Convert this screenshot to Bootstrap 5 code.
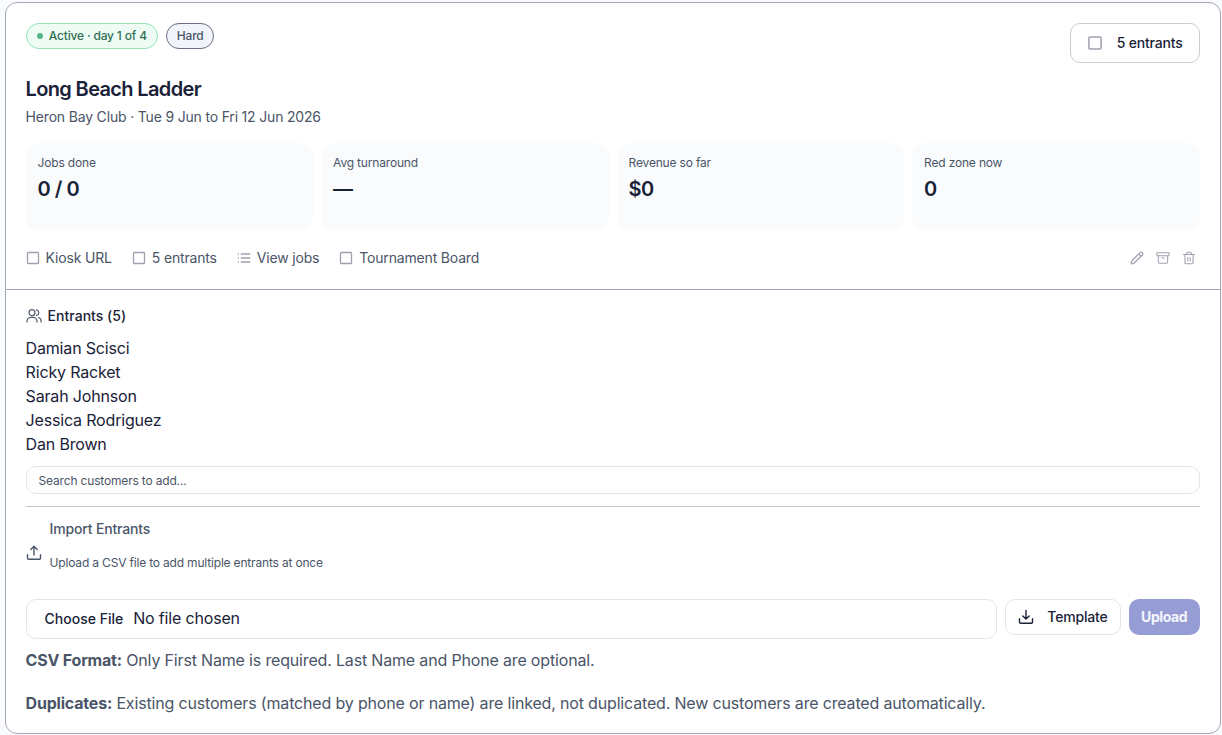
<!DOCTYPE html>
<html lang="en">
<head>
<meta charset="utf-8">
<meta name="viewport" content="width=device-width, initial-scale=1">
<title>Long Beach Ladder</title>
<link href="https://cdn.jsdelivr.net/npm/bootstrap@5.3.0/dist/css/bootstrap.min.css" rel="stylesheet">
<style>
  :root { --ink: #1a2238; --muted: #4a5568; --line: #e2e5f0; --edge: #a3a6b4; }
  body { font-family: Inter, sans-serif; color: var(--ink); background: #fafbfd; font-size: 16px; line-height: 24px; letter-spacing: -.175px; }
  button, input { letter-spacing: inherit; }
  .event-card { margin: 2px 1.4px 0 4.6px; height: 732px; border: 1px solid var(--edge); border-radius: 12px; background: #fff; }
  .event-top { height: 287px; padding: 20px 20px 0; border-bottom: 1px solid var(--edge); }
  .head-row { height: 40px; }
  .pill { height: 26px; padding: 0 9.7px; border: 1px solid #6b7080; border-radius: 13px; background: #f1f4fb; color: var(--muted); font-size: 12px; font-weight: 500; line-height: 16px; }
  .pill-live { border-color: #8fe3b4; background: #effcf5; color: #2f6f52; gap: 6px; padding: 0 10.2px; }
  .dot { width: 6px; height: 6px; border-radius: 50%; background: #55b685; }
  .outline-btn { border: 1px solid var(--line); border-radius: 10px; background: #fff; color: var(--ink); font-size: 14px; font-weight: 500; line-height: 20px; }
  .count-btn { width: 130px; height: 40px; padding: 0 16px 0 17px; border-color: #cbccd3; }
  h1 { font-size: 20px; font-weight: 600; line-height: 28px; letter-spacing: -.65px; margin: 12px 0 0; }
  .venue { font-size: 14px; line-height: 20px; color: var(--muted); letter-spacing: -.18px; margin: 4px 0 0; }
  .stats { display: grid; grid-template-columns: repeat(4, 1fr); gap: 8px; margin-top: 16px; }
  .stat { height: 88px; padding: 12px; border-radius: 12px; background: #fafbfd; }
  .stat-name { font-size: 12px; line-height: 16px; color: var(--muted); }
  .stat-value { font-size: 20px; line-height: 28px; font-weight: 600; letter-spacing: -.5px; margin-top: 4px; }
  .tools { height: 20px; margin-top: 17px; font-size: 14px; line-height: 20px; color: var(--muted); }
  .tool { gap: 6px; }
  svg { display: block; flex: none; fill: none; stroke: currentColor; stroke-linecap: round; stroke-linejoin: round; }
  .faint { color: #9ea2af; }
  .entrants { padding: 16px 20px 0; }
  h2 { font-size: 14px; font-weight: 500; line-height: 20px; letter-spacing: .02px; margin: 0; }
  .search { height: 28px; margin-top: 10px; padding: 0 12px; border: 1px solid var(--line); border-radius: 10px; font-size: 12px; color: var(--muted); background: #fff; }
  .search::placeholder { color: var(--muted); opacity: 1; }
  .import { margin-top: 12px; padding-top: 12px; border-top: 1px solid #c4c5ca; height: 93px; color: var(--muted); }
  .import-icon { margin-top: 16px; }
  .import-title { font-size: 14px; font-weight: 500; line-height: 20px; }
  .import-note { font-size: 12px; line-height: 16px; letter-spacing: -.18px; margin-top: 16px; }
  .file-box { height: 40px; border: 1px solid var(--line); border-radius: 10px; padding: 0 0 2px 18px; }
  .file-btn { font-size: 14px; font-weight: 500; letter-spacing: 0; margin-right: 10px; padding-top: 1px; }
  .tpl { width: 116px; height: 36px; padding: 0 12px; }
  .upload { width: 71px; height: 36px; border: 0; border-radius: 10px; background: #969dd5; color: #f4f5fc; font-size: 14px; font-weight: 700; letter-spacing: -.4px; }
  .help { color: var(--muted); letter-spacing: -.168px; }
  .help b { font-weight: 700; letter-spacing: -.2px; }
</style>
</head>
<body>
<main class="event-card">
  <section class="event-top">
    <div class="head-row d-flex justify-content-between">
      <div class="d-flex gap-2">
        <span class="pill pill-live d-flex align-items-center"><span class="dot"></span>Active · day 1 of 4</span>
        <span class="pill d-flex align-items-center">Hard</span>
      </div>
      <button class="outline-btn count-btn d-flex align-items-center justify-content-between">
        <svg class="faint" width="14" height="14" viewBox="0 0 14 14" stroke-width="1.5"><rect x=".9" y=".9" width="12.2" height="12.2" rx="1"/></svg>5 entrants
      </button>
    </div>
    <h1>Long Beach Ladder</h1>
    <p class="venue">Heron Bay Club · Tue 9 Jun to Fri 12 Jun 2026</p>
    <div class="stats">
      <div class="stat"><div class="stat-name">Jobs done</div><div class="stat-value">0 / 0</div></div>
      <div class="stat"><div class="stat-name">Avg turnaround</div><div class="stat-value">—</div></div>
      <div class="stat"><div class="stat-name">Revenue so far</div><div class="stat-value">$0</div></div>
      <div class="stat"><div class="stat-name">Red zone now</div><div class="stat-value">0</div></div>
    </div>
    <div class="tools d-flex align-items-center justify-content-between">
      <div class="d-flex" style="gap:20px">
        <span class="tool d-flex align-items-center"><svg class="faint" width="14" height="14" viewBox="0 0 14 14" stroke-width="1.3"><rect x="1.5" y="1.5" width="11" height="11" rx=".8"/></svg>Kiosk URL</span>
        <span class="tool d-flex align-items-center"><svg class="faint" width="14" height="14" viewBox="0 0 14 14" stroke-width="1.3"><rect x="1.5" y="1.5" width="11" height="11" rx=".8"/></svg>5 entrants</span>
        <span class="tool d-flex align-items-center"><svg class="faint" width="14" height="14" viewBox="0 0 14 14" stroke-width="1.3"><path d="M4.2 3h8.6M4.2 7h8.6M4.2 11h8.6M1.2 3h.2M1.2 7h.2M1.2 11h.2"/></svg>View jobs</span>
        <span class="tool d-flex align-items-center"><svg class="faint" width="14" height="14" viewBox="0 0 14 14" stroke-width="1.3"><rect x="1.5" y="1.5" width="11" height="11" rx=".8"/></svg>Tournament Board</span>
      </div>
      <div class="faint d-flex" style="gap:12px;padding-right:4px">
        <svg width="14" height="14" viewBox="0 0 24 24" stroke-width="2.1"><path d="M21.2 6.8a2.8 2.8 0 0 0-4-4L3.8 16.2a2 2 0 0 0-.5.8L2 21.4a.5.5 0 0 0 .6.6L7 20.7a2 2 0 0 0 .8-.5zM15 5l4 4"/></svg>
        <svg width="14" height="14" viewBox="0 0 24 24" stroke-width="1.8"><rect x="1.5" y="3" width="21" height="5" rx="1"/><path d="M4 8v11a2 2 0 0 0 2 2h12a2 2 0 0 0 2-2V8M10 12h4"/></svg>
        <svg width="14" height="14" viewBox="0 0 24 24" stroke-width="1.8"><path d="M2.5 6h19M19 6v14a2 2 0 0 1-2 2H7a2 2 0 0 1-2-2V6M8 6V4a2 2 0 0 1 2-2h4a2 2 0 0 1 2 2v2M10 11v6M14 11v6"/></svg>
      </div>
    </div>
  </section>
  <section class="entrants">
    <div class="d-flex align-items-center" style="gap:6px">
      <svg width="16" height="16" viewBox="0 0 24 24" stroke-width="1.9" style="color:#596074"><path d="M1.5 21v-1a6 6 0 0 1 6-6h3a6 6 0 0 1 6 6v1"/><circle cx="9" cy="7" r="4.5"/><path d="M16 2.8a4.4 4.4 0 0 1 0 8.4M19 14.3a6 6 0 0 1 3.7 5.7v1"/></svg>
      <h2>Entrants (5)</h2>
    </div>
    <ul class="list-unstyled mb-0" style="padding-top:10px">
      <li>Damian Scisci</li>
      <li>Ricky Racket</li>
      <li>Sarah Johnson</li>
      <li>Jessica Rodriguez</li>
      <li>Dan Brown</li>
    </ul>
    <input class="search d-block w-100" type="text" placeholder="Search customers to add...">
    <div class="import">
      <div class="d-flex align-items-center gap-2">
        <svg class="import-icon" width="16" height="16" viewBox="0 0 16 16" stroke-width="1.4"><path d="M1.5 9.8V13a1.3 1.3 0 0 0 1.3 1.3h10.4a1.3 1.3 0 0 0 1.3-1.3V9.8M8 10V1.3M4.8 4.5 8 1.3l3.2 3.2"/></svg>
        <div>
          <div class="import-title">Import Entrants</div>
          <div class="import-note">Upload a CSV file to add multiple entrants at once</div>
        </div>
      </div>
    </div>
    <div class="d-flex gap-2">
      <label class="file-box flex-grow-1 d-flex align-items-center"><span class="file-btn">Choose File</span><span>No file chosen</span></label>
      <button class="outline-btn tpl d-flex align-items-center justify-content-between">
        <svg width="16" height="16" viewBox="0 0 16 16" stroke-width="1.4"><path d="M1.5 9.8V13a1.3 1.3 0 0 0 1.3 1.3h10.4a1.3 1.3 0 0 0 1.3-1.3V9.8M8 1.5V10M4.8 6.9 8 10.1l3.2-3.2"/></svg>Template
      </button>
      <button class="upload p-0">Upload</button>
    </div>
    <p class="help mb-0" style="padding-top:9px"><b>CSV Format:</b> Only First Name is required. Last Name and Phone are optional.</p>
    <p class="help mb-0" style="padding-top:19px"><b>Duplicates:</b> Existing customers (matched by phone or name) are linked, not duplicated. New customers are created automatically.</p>
  </section>
</main>
<script src="https://cdn.jsdelivr.net/npm/bootstrap@5.3.0/dist/js/bootstrap.bundle.min.js"></script>
</body>
</html>
